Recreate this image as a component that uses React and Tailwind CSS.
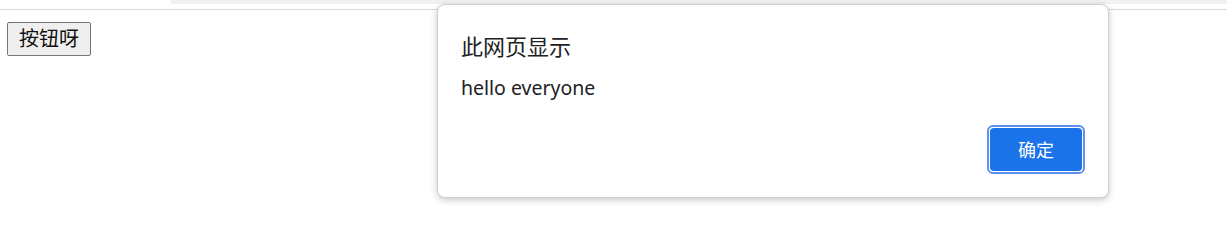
const cjk = { fontFamily: '"Noto Sans", "Noto Sans CJK SC", sans-serif' };

export default function App() {
  return (
    <div className="relative w-[1227px] h-[223px] bg-white overflow-hidden" style={cjk}>
      {/* browser chrome remnant */}
      <div className="h-[10px] border-b border-[#dadada] flex">
        <div className="w-[170px]" />
        <div className="flex-1 h-[4px] bg-[#f1f1f1] rounded-bl-[6px]" />
      </div>

      <div className="pt-[12px] pl-[7px]">
        <button className="w-[84px] h-[34px] bg-[#efefef] border border-[#767676] rounded-[2px] text-[20px] leading-none text-[#111]">
          按钮呀
        </button>
      </div>

      {/* alert dialog */}
      <div className="absolute left-[437px] top-[4px] w-[672px] h-[194px] bg-white border border-[#cfcfcf] rounded-[8px] shadow-[0_2px_7px_rgba(0,0,0,0.22)] flex flex-col px-[23px] pt-[26px] pb-[23px]">
        <div className="text-[22px] leading-[30px] text-[#202124]">此网页显示</div>
        <div className="mt-[14px] text-[19.5px] leading-[26px] text-[#202124]">hello everyone</div>
        <div className="mt-auto flex justify-end">
          <div className="w-[98px] h-[49px] border-2 border-[#5d92ec] rounded-[6px] bg-white p-px">
            <button className="w-full h-full bg-[#1a73e8] rounded-[4px] text-white text-[18px] leading-none">
              确定
            </button>
          </div>
        </div>
      </div>
    </div>
  );
}
